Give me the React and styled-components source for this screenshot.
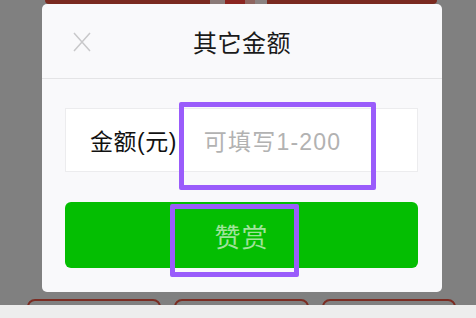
import React from "react";
import styled, { createGlobalStyle } from "styled-components";

const Global = createGlobalStyle`
  html, body { margin: 0; padding: 0; }
  body {
    font-family: "Noto Sans CJK SC", "Noto Sans", sans-serif;
    background: #808080;
  }
`;

const Screen = styled.div`
  position: relative;
  width: 476px;
  height: 318px;
  overflow: hidden;
  background: #808080;
  display: flex;
  flex-direction: column;
`;

const TopStrip = styled.div`
  height: 4px;
  margin: 0 39px 0 45px;
  display: flex;
  border-radius: 0 0 14px 14px;
  overflow: hidden;
`;

const StripPart = styled.div`
  flex: ${(p) => (p.$w ? `0 0 ${p.$w}px` : "1")};
  background: ${(p) => p.$color};
`;

const Modal = styled.div`
  width: 400px;
  height: 288px;
  margin-left: 42px;
  background: #f9f9fb;
  border-radius: 5px;
  display: flex;
  flex-direction: column;
`;

const Header = styled.div`
  height: 74px;
  border-bottom: 1px solid #e4e4e6;
  display: grid;
  grid-template-columns: 1fr auto 1fr;
  align-items: center;
`;

const Close = styled.div`
  padding-left: 31px;
  padding-top: 2px;
  display: flex;
  align-items: center;
`;

const Title = styled.div`
  font-size: 24px;
  color: #1a1a1a;
  letter-spacing: 0.5px;
`;

const Body = styled.div`
  padding: 29px 24px 24px 23px;
  display: flex;
  flex-direction: column;
  gap: 30px;
`;

const InputRow = styled.div`
  height: 62px;
  background: #fff;
  border: 1px solid #ececee;
  display: flex;
  align-items: center;
  padding-left: 24px;
  gap: 27px;
  font-family: "Liberation Sans", "Noto Sans CJK SC", sans-serif;
  font-size: 23px;
  letter-spacing: 0.5px;
`;

const Label = styled.span`
  color: #111;
`;

const Placeholder = styled.span`
  color: #b2b2b2;
  letter-spacing: 1.2px;
`;

const PayButton = styled.div`
  height: 66px;
  background: #04be02;
  border-radius: 6px;
  display: flex;
  align-items: center;
  justify-content: center;
  font-size: 26px;
  color: #9fe39a;
  letter-spacing: 1px;
`;

const ButtonRow = styled.div`
  margin-top: 7px;
  height: 6px;
  overflow: hidden;
  display: flex;
  gap: 13px;
  padding-left: 27px;
`;

const GhostButton = styled.div`
  flex: 0 0 ${(p) => p.$w}px;
  height: 30px;
  border: 2px solid #7b2c22;
  border-radius: 8px;
  box-sizing: border-box;
`;

const BottomBar = styled.div`
  flex: 1;
  background: #ededed;
`;

const Highlight = styled.div`
  position: absolute;
  left: ${(p) => p.$x}px;
  top: ${(p) => p.$y}px;
  width: ${(p) => p.$w}px;
  height: ${(p) => p.$h}px;
  border: 5px solid #9a5cfb;
  border-radius: 2px;
  box-sizing: border-box;
`;

export default function App() {
  return (
    <>
      <Global />
      <Screen>
        <TopStrip>
          <StripPart $w={165} $color="#7a2a20" />
          <StripPart $w={15} $color="#8a7a78" />
          <StripPart $w={20} $color="#8b2520" />
          <StripPart $w={10} $color="#8e6560" />
          <StripPart $w={12} $color="#8a8281" />
          <StripPart $color="#7a2a20" />
        </TopStrip>
        <Modal>
          <Header>
            <Close>
              <svg width="18" height="20" viewBox="0 0 18 20">
                <path d="M1 1 L17 19 M17 1 L1 19" stroke="#c8c8ca" strokeWidth="1.5" fill="none" />
              </svg>
            </Close>
            <Title>其它金额</Title>
            <div />
          </Header>
          <Body>
            <InputRow>
              <Label>金额(元)</Label>
              <Placeholder>可填写1-200</Placeholder>
            </InputRow>
            <PayButton>赞赏</PayButton>
          </Body>
        </Modal>
        <ButtonRow>
          <GhostButton $w={134} />
          <GhostButton $w={135} />
          <GhostButton $w={134} />
        </ButtonRow>
        <BottomBar />
        <Highlight $x={179} $y={102} $w={197} $h={88} />
        <Highlight $x={170} $y={204} $w={129} $h={73} />
      </Screen>
    </>
  );
}
